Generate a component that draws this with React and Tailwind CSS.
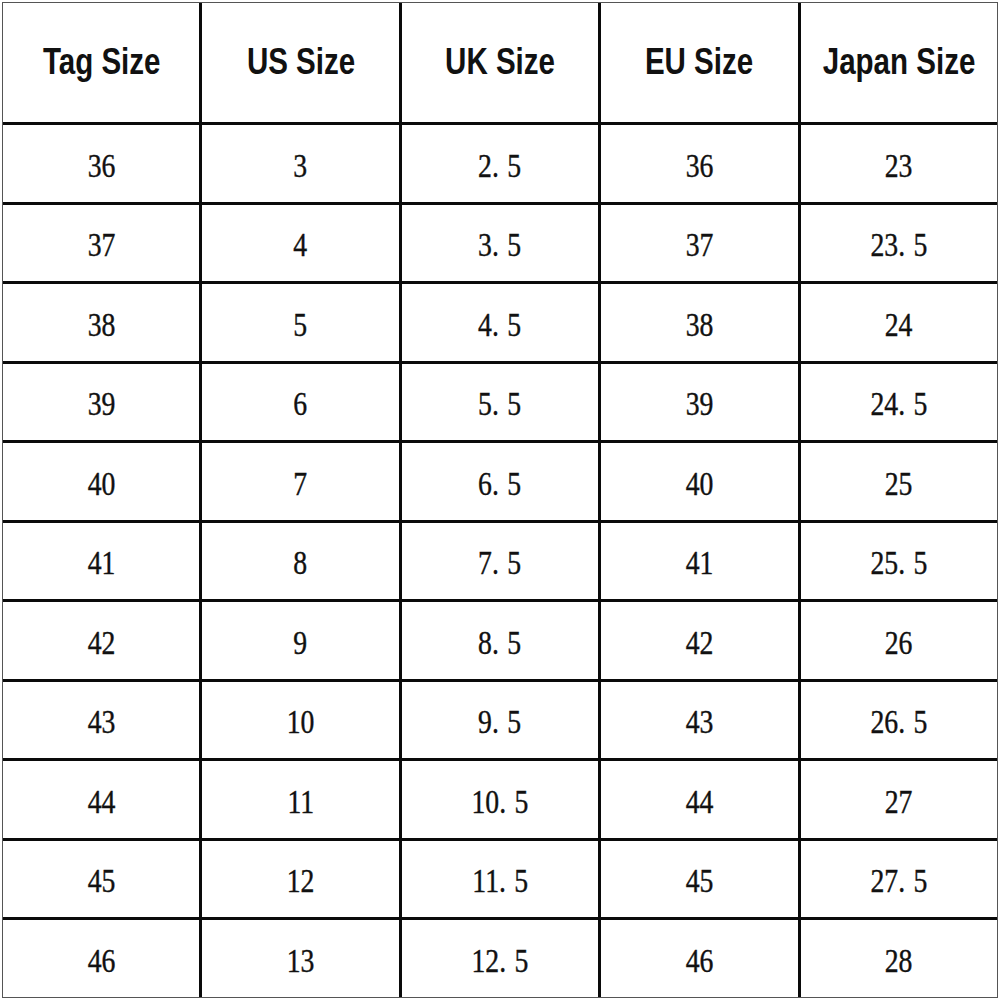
import React from "react";

const headers = ["Tag Size", "US Size", "UK Size", "EU Size", "Japan Size"];
const rows = [
  ["36", "3", "2.5", "36", "23"],
  ["37", "4", "3.5", "37", "23.5"],
  ["38", "5", "4.5", "38", "24"],
  ["39", "6", "5.5", "39", "24.5"],
  ["40", "7", "6.5", "40", "25"],
  ["41", "8", "7.5", "41", "25.5"],
  ["42", "9", "8.5", "42", "26"],
  ["43", "10", "9.5", "43", "26.5"],
  ["44", "11", "10.5", "44", "27"],
  ["45", "12", "11.5", "45", "27.5"],
  ["46", "13", "12.5", "46", "28"],
];

function Num({ v }) {
  const i = v.indexOf(".");
  if (i < 0) return <>{v}</>;
  return (
    <>
      {v.slice(0, i)}
      <span className="mr-[10px]">.</span>
      {v.slice(i + 1)}
    </>
  );
}

export default function App() {
  return (
    <div className="w-[1000px] h-[1000px] bg-white p-[2px]">
      <div className="w-[996px] h-[996px] border border-[#555] bg-[#0a0a0a] grid grid-cols-5 grid-rows-[119px_repeat(11,1fr)] gap-[3px]">
        {headers.map((h) => (
          <div
            key={h}
            className="bg-white flex items-center justify-center text-[#111] font-bold text-[36px]"
            style={{ fontFamily: '"Liberation Sans", Arial, sans-serif' }}
          >
            <span className="inline-block whitespace-nowrap scale-x-[0.82] pb-[2px]">{h}</span>
          </div>
        ))}
        {rows.map((r, ri) =>
          r.map((c, ci) => (
            <div
              key={ri + "-" + ci}
              className="bg-white flex items-center justify-center text-[#111] text-[33px]"
              style={{ fontFamily: '"Liberation Serif", "Times New Roman", serif' }}
            >
              <span className="inline-block whitespace-nowrap scale-x-[0.84] pt-[6px] [-webkit-text-stroke:0.4px_#111]">
                <Num v={c} />
              </span>
            </div>
          ))
        )}
      </div>
    </div>
  );
}
